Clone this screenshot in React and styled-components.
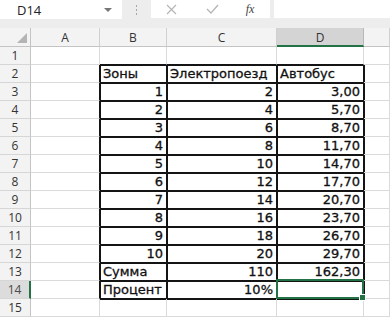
import React from 'react';
import styled, { createGlobalStyle } from 'styled-components';

const GREEN = '#217346';
const GRID = '#dadada';
const INK = '#141414';

const COLS = ['A', 'B', 'C', 'D', 'E'];

const DATA = {
  2: [{ v: 'Зоны' }, { v: 'Электропоезд' }, { v: 'Автобус' }],
  3: [{ v: '1', n: true }, { v: '2', n: true }, { v: '3,00', n: true }],
  4: [{ v: '2', n: true }, { v: '4', n: true }, { v: '5,70', n: true }],
  5: [{ v: '3', n: true }, { v: '6', n: true }, { v: '8,70', n: true }],
  6: [{ v: '4', n: true }, { v: '8', n: true }, { v: '11,70', n: true }],
  7: [{ v: '5', n: true }, { v: '10', n: true }, { v: '14,70', n: true }],
  8: [{ v: '6', n: true }, { v: '12', n: true }, { v: '17,70', n: true }],
  9: [{ v: '7', n: true }, { v: '14', n: true }, { v: '20,70', n: true }],
  10: [{ v: '8', n: true }, { v: '16', n: true }, { v: '23,70', n: true }],
  11: [{ v: '9', n: true }, { v: '18', n: true }, { v: '26,70', n: true }],
  12: [{ v: '10', n: true }, { v: '20', n: true }, { v: '29,70', n: true }],
  13: [{ v: 'Сумма' }, { v: '110', n: true }, { v: '162,30', n: true }],
  14: [{ v: 'Процент' }, { v: '10%', n: true }, { v: '' }],
};

const inTable = (r, c) => r >= 2 && r <= 14 && c >= 2 && c <= 4;

const GlobalStyle = createGlobalStyle`
  body {
    margin: 0;
    background: #ffffff;
    font-family: "DejaVu Sans", "Open Sans", sans-serif;
  }
`;

const Page = styled.div`
  width: 390px;
  height: 327px;
  overflow: hidden;
  background: #ffffff;
`;

const Toolbar = styled.div`
  display: flex;
  align-items: flex-start;
  height: 28px;
  background: #ededed;
`;

const NameBox = styled.div`
  display: flex;
  align-items: center;
  justify-content: space-between;
  width: 122px;
  height: 19px;
  box-sizing: border-box;
  padding: 0 10px 0 17px;
  background: #ffffff;
  font-family: "Open Sans", sans-serif;
  font-size: 13px;
  color: #222;
`;

const Caret = styled.span`
  width: 0;
  height: 0;
  border-left: 4px solid transparent;
  border-right: 4px solid transparent;
  border-top: 4px solid #777;
`;

const Grip = styled.div`
  display: flex;
  flex-direction: column;
  gap: 2px;
  width: 29px;
  align-items: center;
  padding-top: 5px;
  span {
    width: 1px;
    height: 2px;
    background: #a8a8a8;
  }
`;

const FxBox = styled.div`
  display: flex;
  align-items: center;
  width: 119px;
  height: 18px;
  background: #ffffff;
  margin-right: 4px;
`;

const FxButton = styled.span`
  display: flex;
  justify-content: center;
  width: ${(p) => p.$w}px;
  color: ${(p) => p.$color};
`;

const FxLabel = styled.span`
  font-family: "Liberation Serif", serif;
  font-style: italic;
  font-size: 12px;
  color: #444;
`;

const FormulaInput = styled.div`
  flex: 1;
  height: 18px;
  background: #ffffff;
`;

const Sheet = styled.div`
  display: grid;
  grid-template-columns: 31px 69px 67px 110px 87px 26px;
  grid-template-rows: 19px repeat(15, 18px);
`;

const Corner = styled.div`
  display: flex;
  align-items: flex-end;
  justify-content: flex-end;
  padding: 0 3px 3px 0;
  background: #f3f3f3;
  border-right: 1px solid #c4c4c4;
  border-bottom: 1px solid #c4c4c4;
`;

const ColHeader = styled.div`
  display: flex;
  align-items: center;
  justify-content: center;
  box-sizing: border-box;
  padding-top: 1px;
  background: ${(p) => (p.$active ? '#d4d4d4' : '#f3f3f3')};
  border-right: 1px solid ${(p) => (p.$active ? '#b8b8b8' : '#d0d0d0')};
  border-bottom: ${(p) => (p.$active ? `2px solid ${GREEN}` : '1px solid #c4c4c4')};
  font-family: "Open Sans", sans-serif;
  font-size: 12px;
  color: #333;
`;

const RowHeader = styled.div`
  display: flex;
  align-items: center;
  justify-content: center;
  box-sizing: border-box;
  background: ${(p) => (p.$active ? '#dcdcdc' : '#f3f3f3')};
  border-right: ${(p) => (p.$active ? `2px solid ${GREEN}` : '1px solid #c4c4c4')};
  border-bottom: 1px solid #d6d6d6;
  font-family: "Open Sans", sans-serif;
  font-size: 12px;
  color: ${(p) => (p.$active ? '#4a4a4a' : '#333')};
`;

const Cell = styled.div`
  position: relative;
  display: flex;
  align-items: center;
  justify-content: ${(p) => (p.$num ? 'flex-end' : 'flex-start')};
  box-sizing: border-box;
  padding: 0 3px;
  border-right: 1px solid ${(p) => (p.$blackRight ? INK : GRID)};
  border-bottom: 1px solid ${(p) => (p.$blackBottom ? INK : GRID)};
  box-shadow: ${(p) => p.$shadow};
  font-size: 13px;
  color: #111;
  -webkit-text-stroke: 0.3px #111;
  white-space: nowrap;
`;

const Selection = styled.div`
  position: absolute;
  top: -2px;
  left: -1px;
  right: -1px;
  bottom: -1px;
  border: 2px solid ${GREEN};
  z-index: 2;
`;

const Handle = styled.div`
  position: absolute;
  right: -4px;
  bottom: -4px;
  width: 5px;
  height: 5px;
  background: ${GREEN};
  border: 1px solid #ffffff;
`;

const shadowFor = (r, c) => {
  const parts = [];
  if (inTable(r, c) || inTable(r, c - 1)) parts.push(`inset 1px 0 0 ${INK}`);
  if (inTable(r, c) || inTable(r - 1, c)) parts.push(`inset 0 1px 0 ${INK}`);
  return parts.length ? parts.join(', ') : 'none';
};

const App = () => {
  const rows = Array.from({ length: 15 }, (_, i) => i + 1);

  return (
    <Page>
      <GlobalStyle />
      <Toolbar>
        <NameBox>
          D14
          <Caret />
        </NameBox>
        <Grip>
          <span />
          <span />
          <span />
        </Grip>
        <FxBox>
          <FxButton $w={40} $color="#b5b5b5">
            <svg width="11" height="11" viewBox="0 0 11 11">
              <path d="M1 1 L10 10 M10 1 L1 10" stroke="currentColor" strokeWidth="1.2" />
            </svg>
          </FxButton>
          <FxButton $w={42} $color="#b5b5b5">
            <svg width="13" height="10" viewBox="0 0 13 10">
              <path d="M1 5 L5 9 L12 1" stroke="currentColor" strokeWidth="1.3" fill="none" />
            </svg>
          </FxButton>
          <FxButton $w={34} $color="#444">
            <FxLabel>fx</FxLabel>
          </FxButton>
        </FxBox>
        <FormulaInput />
      </Toolbar>

      <Sheet>
        <Corner>
          <svg width="10" height="10" viewBox="0 0 10 10">
            <polygon points="10,0 10,10 0,10" fill="#b4b4b4" />
          </svg>
        </Corner>
        {COLS.map((col) => (
          <ColHeader key={col} $active={col === 'D'}>
            {col === 'E' ? '' : col}
          </ColHeader>
        ))}

        {rows.map((r) => (
          <React.Fragment key={r}>
            <RowHeader $active={r === 14}>{r}</RowHeader>
            {COLS.map((col, i) => {
              const c = i + 1;
              const item = inTable(r, c) ? DATA[r][c - 2] : null;
              return (
                <Cell
                  key={col}
                  $num={item?.n}
                  $blackRight={inTable(r, c) || inTable(r, c + 1)}
                  $blackBottom={inTable(r, c) || inTable(r + 1, c)}
                  $shadow={shadowFor(r, c)}
                >
                  {item?.v}
                  {r === 14 && col === 'D' && (
                    <Selection>
                      <Handle />
                    </Selection>
                  )}
                </Cell>
              );
            })}
          </React.Fragment>
        ))}
      </Sheet>
    </Page>
  );
};

export default App;
